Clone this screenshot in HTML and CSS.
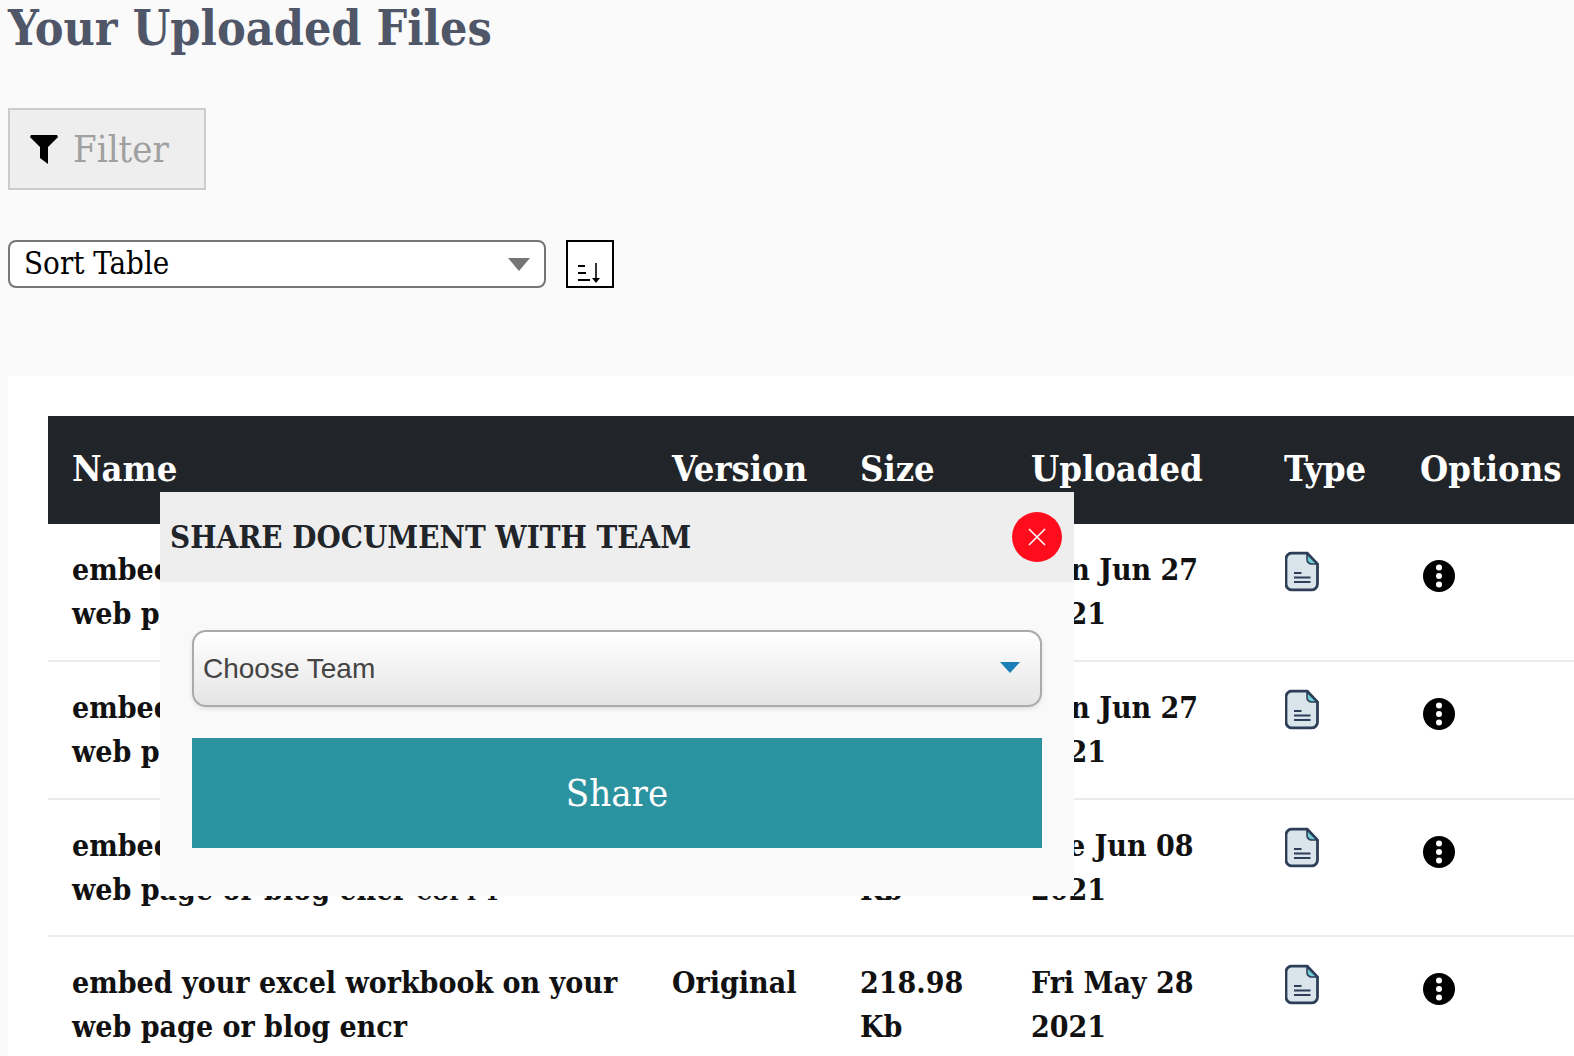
FILE: index.html
```html
<!DOCTYPE html>
<html lang="en">

<head>
  <meta charset="UTF-8">
  <meta name="viewport" content="width=device-width, initial-scale=1.0">
  <title>Your Uploaded Files</title>
  <link rel="stylesheet" href="styles.css">
</head>

<body>
  <h1 class="page-title">Your Uploaded Files</h1>

  <button class="filter-btn" type="button">
    <svg class="filter-icon" viewBox="0 0 28 29"><path d="M1 0h26l1 2-10 10v17l-8-6V12L0 2z"/></svg>
    Filter
  </button>

  <div class="sort-row">
    <div class="sort-select">Sort Table<span class="sort-arrow"></span></div>
    <button class="sort-btn" type="button">
      <svg viewBox="0 0 24 20"><path d="M0 3h7M0 10h8M0 17h12" fill="none" stroke="#000" stroke-width="2"/><path d="M18 0v18" fill="none" stroke="#000" stroke-width="1.600"/><path d="M14 15h8l-4 5z"/></svg>
    </button>
  </div>

  <div class="table-card">
    <table class="files-table">
      <thead>
        <tr>
          <th class="col-name">Name</th>
          <th class="col-version">Version</th>
          <th class="col-size">Size</th>
          <th class="col-uploaded">Uploaded</th>
          <th class="col-type">Type</th>
          <th>Options</th>
        </tr>
      </thead>
      <tbody>
        <tr>
          <td>embed your excel workbook on your web page or blog encr <span class="copy-tag">COPY 3</span></td>
          <td>Original</td>
          <td>218.98 Kb</td>
          <td>Sun Jun 27 2021</td>
          <td><svg class="doc-icon" viewBox="0 0 34 40"><use href="#doc"/></svg></td>
          <td><svg class="more-icon" viewBox="0 0 32 32"><use href="#more"/></svg></td>
        </tr>
        <tr>
          <td>embed your excel workbook on your web page or blog encr <span class="copy-tag">COPY 2</span></td>
          <td>Original</td>
          <td>218.98 Kb</td>
          <td>Sun Jun 27 2021</td>
          <td><svg class="doc-icon" viewBox="0 0 34 40"><use href="#doc"/></svg></td>
          <td><svg class="more-icon" viewBox="0 0 32 32"><use href="#more"/></svg></td>
        </tr>
        <tr>
          <td>embed your excel workbook on your web page or blog encr <span class="copy-tag">COPY 1</span></td>
          <td>Original</td>
          <td>218.98 Kb</td>
          <td>Tue Jun 08 2021</td>
          <td><svg class="doc-icon" viewBox="0 0 34 40"><use href="#doc"/></svg></td>
          <td><svg class="more-icon" viewBox="0 0 32 32"><use href="#more"/></svg></td>
        </tr>
        <tr>
          <td>embed your excel workbook on your web page or blog encr</td>
          <td>Original</td>
          <td>218.98 Kb</td>
          <td>Fri May 28 2021</td>
          <td><svg class="doc-icon" viewBox="0 0 34 40"><use href="#doc"/></svg></td>
          <td><svg class="more-icon" viewBox="0 0 32 32"><use href="#more"/></svg></td>
        </tr>
      </tbody>
    </table>
  </div>

  <!-- share dialog -->
  <div class="modal">
    <div class="modal-head">
      <h2>SHARE DOCUMENT WITH TEAM</h2>
      <button class="modal-close" type="button">
        <svg viewBox="0 0 20 20"><path d="M2 2l16 16M18 2L2 18" stroke="#fff" stroke-width="1.600"/></svg>
      </button>
    </div>
    <div class="modal-body">
      <div class="team-select">Choose Team<span class="team-arrow"></span></div>
      <button class="share-btn" type="button">Share</button>
    </div>
  </div>

  <svg class="icon-defs" width="0" height="0">
    <symbol id="doc" viewBox="0 0 34 40">
      <path d="M7 1.500h15l10.500 11V32.500a6 6 0 0 1-6 6H7a6 6 0 0 1-6-6V7.500a6 6 0 0 1 6-6z" fill="#d9e5ea" stroke="#2c3e58" stroke-width="2.800"/>
      <path d="M22 2.500V8a4.500 4.500 0 0 0 4.500 4.500h5.500z" fill="#6fcdd3" stroke="#2c3e58" stroke-width="1.600"/>
      <path d="M9 21.500h7.500M9 26h16.500M9 30.500h16.500" stroke="#2c3e58" stroke-width="2.200" fill="none"/>
    </symbol>
    <symbol id="more" viewBox="0 0 32 32">
      <circle cx="16" cy="16" r="16" fill="#000"/>
      <circle cx="16" cy="7.500" r="3" fill="#fff"/>
      <circle cx="16" cy="16" r="3" fill="#fff"/>
      <circle cx="16" cy="24.500" r="3" fill="#fff"/>
    </symbol>
  </svg>
</body>

</html>
```

FILE: styles.css
```css
html, body {
  height: 1056px;
  overflow: hidden;
}

body {
  margin: 0;
  padding: 0 0 0 8px;
  position: relative;
  background-color: #fafafa;
  font-family: 'DejaVu Serif Condensed', 'DejaVu Serif', serif;
}

.page-title {
  margin: 0;
  height: 108px;
  color: #4f5668;
  font-size: 48px;
  line-height: 57px;
  font-weight: bold;
}

.filter-btn {
  display: flex;
  align-items: center;
  gap: 15px;
  width: 198px;
  height: 82px;
  padding: 0 0 0 20px;
  background: #eeeeee;
  border: 2px solid #cccccc;
  color: #a0a0a0;
  font-family: inherit;
  font-size: 38px;
}

.filter-icon {
  width: 28px;
  height: 29px;
  fill: #000;
}

.sort-row {
  display: flex;
  gap: 20px;
  margin-top: 50px;
}

.sort-select {
  position: relative;
  box-sizing: border-box;
  width: 538px;
  height: 48px;
  padding-left: 14px;
  background: #fff;
  border: 2px solid #757575;
  border-radius: 8px;
  color: #000;
  font-size: 31px;
  line-height: 43px;
}

.sort-arrow {
  position: absolute;
  right: 14px;
  top: 16px;
  border-left: 11px solid transparent;
  border-right: 11px solid transparent;
  border-top: 13px solid #757575;
}

.sort-btn {
  box-sizing: border-box;
  width: 48px;
  height: 48px;
  padding: 18px 0 0 10px;
  background: #fff;
  border: 2px solid #000;
}

.sort-btn svg {
  display: block;
  width: 24px;
  height: 20px;
}

.table-card {
  box-sizing: border-box;
  width: 1566px;
  margin-top: 88px;
  padding: 40px 0 0 40px;
  height: 700px;
  background: #fff;
}

.files-table {
  width: 1526px;
  table-layout: fixed;
  border-collapse: collapse;
}

.files-table th {
  height: 107.500px;
  padding: 0 0 4px 24px;
  box-sizing: border-box;
  background: #212529;
  color: #fff;
  font-size: 36px;
  font-weight: bold;
  text-align: left;
}

.col-name { width: 600px; }
.col-version { width: 188px; }
.col-size { width: 171px; }
.col-uploaded { width: 253px; }
.col-type { width: 136px; }

.files-table td {
  box-sizing: border-box;
  height: 137.500px;
  padding: 24px 24px 10px;
  border-bottom: 2px solid #e9ecef;
  color: #111;
  font-size: 30px;
  line-height: 44px;
  font-weight: bold;
  vertical-align: top;
}

.copy-tag {
  font-size: 22px;
  line-height: 1;
}

.doc-icon {
  display: block;
  width: 34px;
  height: 41px;
  margin: 3px 0 0 1px;
}

.more-icon {
  display: block;
  width: 32px;
  height: 32px;
  margin: 12px 0 0 3px;
}

.icon-defs {
  position: absolute;
}

.modal {
  position: absolute;
  left: 160px;
  top: 492px;
  width: 914px;
  height: 404px;
  background: #f9f9f9;
}

.modal-head {
  display: flex;
  align-items: center;
  justify-content: space-between;
  height: 90px;
  padding: 0 12px 0 10px;
  box-sizing: border-box;
  background: #eeeeee;
}

.modal-head h2 {
  margin: 0;
  color: #212529;
  font-size: 31px;
  font-weight: bold;
}

.modal-close {
  display: flex;
  align-items: center;
  justify-content: center;
  width: 50px;
  height: 50px;
  padding: 0;
  background: #ff0d1d;
  border: none;
  border-radius: 50%;
}

.modal-close svg {
  width: 20px;
  height: 20px;
}

.modal-body {
  padding: 48px 32px 0 32px;
}

.team-select {
  position: relative;
  box-sizing: border-box;
  height: 77px;
  padding-left: 9px;
  background: linear-gradient(#ffffff, #e5e5e5);
  border: 2px solid #aaaaaa;
  border-radius: 14px;
  box-shadow: 0 2px 4px rgba(0, 0, 0, 0.1);
  color: #444444;
  font-family: 'Liberation Sans', Arial, sans-serif;
  font-size: 28px;
  line-height: 73px;
}

.team-arrow {
  position: absolute;
  right: 20px;
  top: 30px;
  border-left: 10px solid transparent;
  border-right: 10px solid transparent;
  border-top: 11px solid #1a7fb8;
}

.share-btn {
  display: block;
  width: 100%;
  height: 110px;
  margin-top: 31px;
  background: #2b92a0;
  border: none;
  color: #fff;
  font-family: inherit;
  font-size: 38px;
}
```
